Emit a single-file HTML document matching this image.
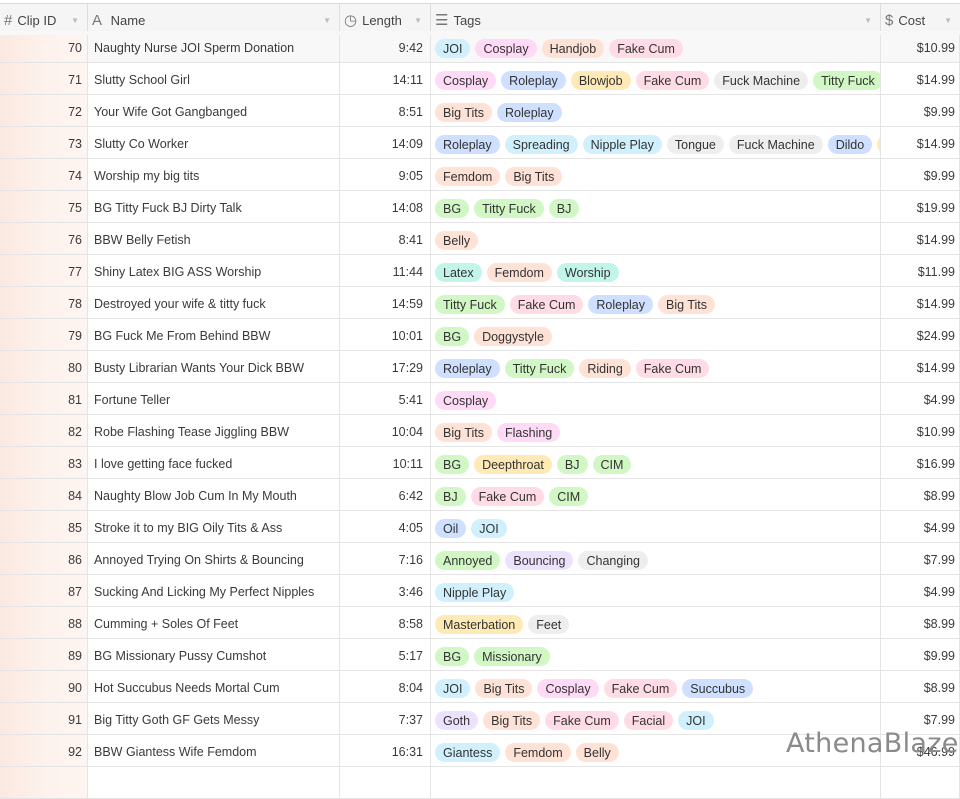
<!DOCTYPE html>
<html><head><meta charset="utf-8"><style>
*{margin:0;padding:0;box-sizing:border-box}
body{width:960px;height:772px;overflow:hidden;background:#fff;font-family:"Liberation Sans",sans-serif;font-size:12.5px;color:#3a3a3a;position:relative}
.hdr{position:absolute;left:0;top:3px;width:960px;height:32px;background:#f5f5f5;border-top:1px solid #dcdcdc;border-bottom:1px solid #dcdcdc;color:#444;font-size:13px}
.hdr div{position:absolute;top:0;height:31px;line-height:33px;border-right:1px solid #ddd;padding-left:4px}
.hdr .ic{color:#777;margin-right:5px;font-size:15px}
.hdr .dd{position:absolute;right:8px;top:0;color:#bbb;font-size:8px}
.row{position:absolute;left:0;width:960px;height:32px;border-bottom:1px solid #e4e4e4}
.row>div{position:absolute;top:0;height:31px;line-height:34px;border-right:1px solid #e4e4e4;white-space:nowrap;overflow:hidden}
.id{left:0;width:88px;text-align:right;padding-right:5px;background:linear-gradient(90deg,#fbe9e0,#fdf3ee 60%,#fdf5f1)}
.nm{left:88px;width:252px;padding-left:6px}
.ln{left:340px;width:91px;text-align:right;padding-right:7px}
.tg{left:431px;width:450px;padding-left:4px}
.cs{left:881px;width:79px;text-align:right;padding-right:4px}
.tg span{display:inline-block;height:19px;line-height:20px;padding:0 8px;border-radius:10px;margin-right:5px;vertical-align:middle;color:#333}
.b{background:#d0f0fd}.p{background:#ffdaf6}.o{background:#fee2d5}.r{background:#ffdce5}.c{background:#cfdfff}.y{background:#ffeab6}.g{background:#eee}.gr{background:#d1f7c4}.t{background:#c2f5e9}.v{background:#ede2fe}
.wm{position:absolute;left:786px;top:728px;font-size:27px;color:#8a8a8a;font-family:"DejaVu Sans","Liberation Sans",sans-serif;letter-spacing:0.3px}
</style></head><body>
<div class="hdr">
<div style="left:0;width:88px"><span class="ic">#</span>Clip ID<span class="dd">▼</span></div>
<div style="left:88px;width:252px"><span class="ic">A</span> Name<span class="dd">▼</span></div>
<div style="left:340px;width:91px"><span class="ic">◷</span>Length<span class="dd">▼</span></div>
<div style="left:431px;width:450px"><span class="ic">☰</span>Tags<span class="dd">▼</span></div>
<div style="left:881px;width:79px;border-right:none"><span class="ic">$</span>Cost<span class="dd">▼</span></div>
</div>

<div class="row" style="top:31px;height:32px;background:#f8f8f8"><div class="id" style="top:4px;height:27px;line-height:26px">70</div><div class="nm" style="top:4px;height:27px;line-height:26px">Naughty Nurse JOI Sperm Donation</div><div class="ln" style="top:4px;height:27px;line-height:26px">9:42</div><div class="tg" style="top:4px;height:27px;line-height:26px"><span class="b">JOI</span><span class="p">Cosplay</span><span class="o">Handjob</span><span class="r">Fake Cum</span></div><div class="cs" style="top:4px;height:27px;line-height:26px">$10.99</div></div>

<div class="row" style="top:63px"><div class="id">71</div><div class="nm">Slutty School Girl</div><div class="ln">14:11</div><div class="tg"><span class="p">Cosplay</span><span class="c">Roleplay</span><span class="y">Blowjob</span><span class="r">Fake Cum</span><span class="g">Fuck Machine</span><span class="gr">Titty Fuck</span></div><div class="cs">$14.99</div></div>
<div class="row" style="top:95px"><div class="id">72</div><div class="nm">Your Wife Got Gangbanged</div><div class="ln">8:51</div><div class="tg"><span class="o">Big Tits</span><span class="c">Roleplay</span></div><div class="cs">$9.99</div></div>
<div class="row" style="top:127px"><div class="id">73</div><div class="nm">Slutty Co Worker</div><div class="ln">14:09</div><div class="tg"><span class="c">Roleplay</span><span class="b">Spreading</span><span class="b">Nipple Play</span><span class="g">Tongue</span><span class="g">Fuck Machine</span><span class="c">Dildo</span><span class="y">Toy</span></div><div class="cs">$14.99</div></div>
<div class="row" style="top:159px"><div class="id">74</div><div class="nm">Worship my big tits</div><div class="ln">9:05</div><div class="tg"><span class="o">Femdom</span><span class="o">Big Tits</span></div><div class="cs">$9.99</div></div>
<div class="row" style="top:191px"><div class="id">75</div><div class="nm">BG Titty Fuck BJ Dirty Talk</div><div class="ln">14:08</div><div class="tg"><span class="gr">BG</span><span class="gr">Titty Fuck</span><span class="gr">BJ</span></div><div class="cs">$19.99</div></div>
<div class="row" style="top:223px"><div class="id">76</div><div class="nm">BBW Belly Fetish</div><div class="ln">8:41</div><div class="tg"><span class="o">Belly</span></div><div class="cs">$14.99</div></div>
<div class="row" style="top:255px"><div class="id">77</div><div class="nm">Shiny Latex BIG ASS Worship</div><div class="ln">11:44</div><div class="tg"><span class="t">Latex</span><span class="o">Femdom</span><span class="t">Worship</span></div><div class="cs">$11.99</div></div>
<div class="row" style="top:287px"><div class="id">78</div><div class="nm">Destroyed your wife &amp; titty fuck</div><div class="ln">14:59</div><div class="tg"><span class="gr">Titty Fuck</span><span class="r">Fake Cum</span><span class="c">Roleplay</span><span class="o">Big Tits</span></div><div class="cs">$14.99</div></div>
<div class="row" style="top:319px"><div class="id">79</div><div class="nm">BG Fuck Me From Behind BBW</div><div class="ln">10:01</div><div class="tg"><span class="gr">BG</span><span class="o">Doggystyle</span></div><div class="cs">$24.99</div></div>
<div class="row" style="top:351px"><div class="id">80</div><div class="nm">Busty Librarian Wants Your Dick BBW</div><div class="ln">17:29</div><div class="tg"><span class="c">Roleplay</span><span class="gr">Titty Fuck</span><span class="o">Riding</span><span class="r">Fake Cum</span></div><div class="cs">$14.99</div></div>
<div class="row" style="top:383px"><div class="id">81</div><div class="nm">Fortune Teller</div><div class="ln">5:41</div><div class="tg"><span class="p">Cosplay</span></div><div class="cs">$4.99</div></div>
<div class="row" style="top:415px"><div class="id">82</div><div class="nm">Robe Flashing Tease Jiggling BBW</div><div class="ln">10:04</div><div class="tg"><span class="o">Big Tits</span><span class="p">Flashing</span></div><div class="cs">$10.99</div></div>
<div class="row" style="top:447px"><div class="id">83</div><div class="nm">I love getting face fucked</div><div class="ln">10:11</div><div class="tg"><span class="gr">BG</span><span class="y">Deepthroat</span><span class="gr">BJ</span><span class="gr">CIM</span></div><div class="cs">$16.99</div></div>
<div class="row" style="top:479px"><div class="id">84</div><div class="nm">Naughty Blow Job Cum In My Mouth</div><div class="ln">6:42</div><div class="tg"><span class="gr">BJ</span><span class="r">Fake Cum</span><span class="gr">CIM</span></div><div class="cs">$8.99</div></div>
<div class="row" style="top:511px"><div class="id">85</div><div class="nm">Stroke it to my BIG Oily Tits &amp; Ass</div><div class="ln">4:05</div><div class="tg"><span class="c">Oil</span><span class="b">JOI</span></div><div class="cs">$4.99</div></div>
<div class="row" style="top:543px"><div class="id">86</div><div class="nm">Annoyed Trying On Shirts &amp; Bouncing</div><div class="ln">7:16</div><div class="tg"><span class="gr">Annoyed</span><span class="v">Bouncing</span><span class="g">Changing</span></div><div class="cs">$7.99</div></div>
<div class="row" style="top:575px"><div class="id">87</div><div class="nm">Sucking And Licking My Perfect Nipples</div><div class="ln">3:46</div><div class="tg"><span class="b">Nipple Play</span></div><div class="cs">$4.99</div></div>
<div class="row" style="top:607px"><div class="id">88</div><div class="nm">Cumming + Soles Of Feet</div><div class="ln">8:58</div><div class="tg"><span class="y">Masterbation</span><span class="g">Feet</span></div><div class="cs">$8.99</div></div>
<div class="row" style="top:639px"><div class="id">89</div><div class="nm">BG Missionary Pussy Cumshot</div><div class="ln">5:17</div><div class="tg"><span class="gr">BG</span><span class="gr">Missionary</span></div><div class="cs">$9.99</div></div>
<div class="row" style="top:671px"><div class="id">90</div><div class="nm">Hot Succubus Needs Mortal Cum</div><div class="ln">8:04</div><div class="tg"><span class="b">JOI</span><span class="o">Big Tits</span><span class="p">Cosplay</span><span class="r">Fake Cum</span><span class="c">Succubus</span></div><div class="cs">$8.99</div></div>
<div class="row" style="top:703px"><div class="id">91</div><div class="nm">Big Titty Goth GF Gets Messy</div><div class="ln">7:37</div><div class="tg"><span class="v">Goth</span><span class="o">Big Tits</span><span class="r">Fake Cum</span><span class="r">Facial</span><span class="b">JOI</span></div><div class="cs">$7.99</div></div>
<div class="row" style="top:735px"><div class="id">92</div><div class="nm">BBW Giantess Wife Femdom</div><div class="ln">16:31</div><div class="tg"><span class="b">Giantess</span><span class="o">Femdom</span><span class="o">Belly</span></div><div class="cs">$46.99</div></div>
<div class="row" style="top:767px"><div class="id"></div><div class="nm"></div><div class="ln"></div><div class="tg"></div><div class="cs"></div></div>
<div class="wm">AthenaBlaze</div>
</body></html>
